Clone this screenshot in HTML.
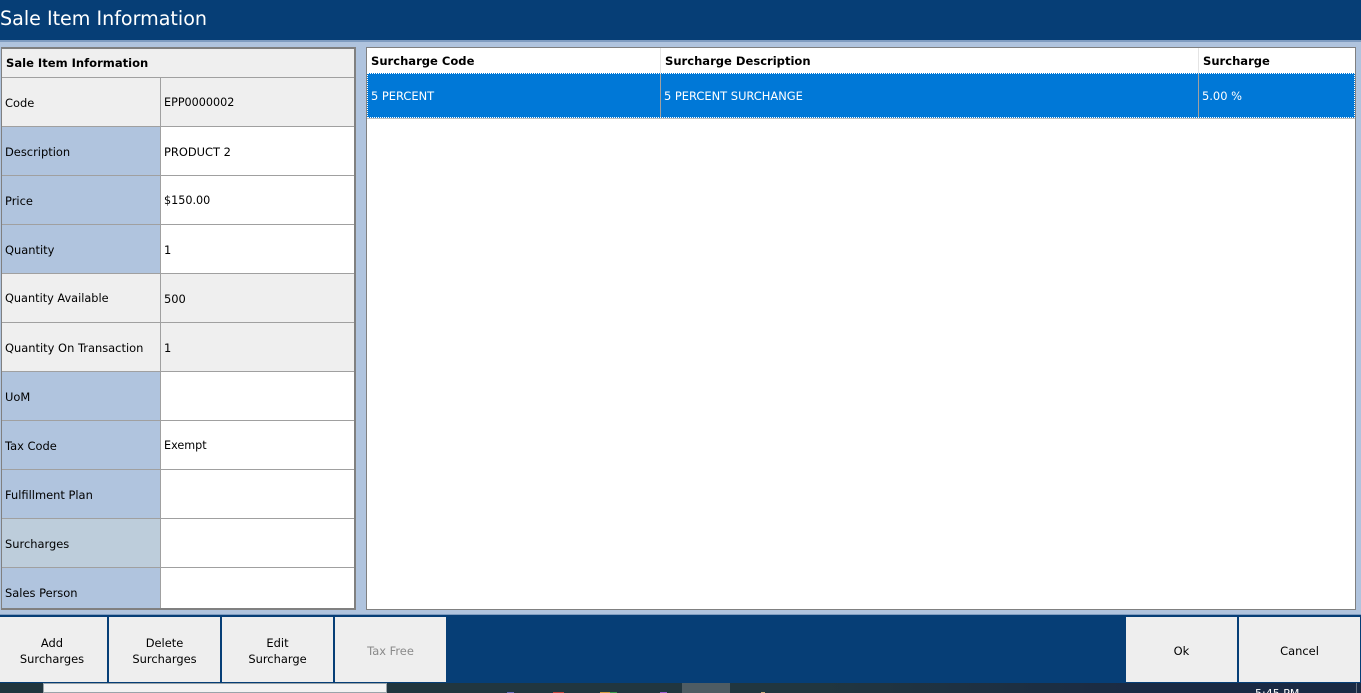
<!DOCTYPE html>
<html>
<head>
<meta charset="utf-8">
<style>
html,body{margin:0;padding:0;}
body{width:1361px;height:693px;overflow:hidden;position:relative;background:#b0c4de;font-family:"DejaVu Sans","Liberation Sans",sans-serif;font-size:11.45px;color:#000;}
div{position:absolute;box-sizing:border-box;}
.t{white-space:nowrap;line-height:14px;}
.b{font-weight:bold;font-size:11.55px;}
.w{color:#fff;}
.btn{background:#eeeeee;top:617px;height:65px;padding-top:2px;text-align:center;line-height:16px;display:flex;align-items:center;justify-content:center;}
</style>
</head>
<body>
<div style="left:0;top:0;width:1361px;height:40px;background:#063e76;"></div>
<div style="left:0;top:40px;width:1361px;height:2px;background:#7f9cc0;"></div>
<div class="t w" style="left:0;top:7px;font-size:19.1px;line-height:24px;">Sale Item Information</div>

<!-- Left panel -->
<div style="left:1px;top:47px;width:355px;height:563px;background:#fff;border:2px solid #808080;border-left-width:1px;"></div>
<div style="left:2px;top:49px;width:352px;height:28px;background:#efefef;"></div>
<div style="left:2px;top:78px;width:158px;height:48px;background:#efefef;"></div>
<div style="left:161px;top:78px;width:193px;height:48px;background:#efefef;"></div>
<div style="left:2px;top:127px;width:158px;height:146px;background:#b0c4de;"></div>
<div style="left:2px;top:274px;width:352px;height:97px;background:#efefef;"></div>
<div style="left:2px;top:372px;width:158px;height:146px;background:#b0c4de;"></div>
<div style="left:2px;top:519px;width:158px;height:48px;background:#bdcddb;"></div>
<div style="left:2px;top:568px;width:158px;height:40px;background:#b0c4de;"></div>
<div style="left:160px;top:78px;width:1px;height:530px;background:#a0a0a0;"></div>
<div style="left:2px;top:77px;width:352px;height:1px;background:#a0a0a0;"></div>
<div style="left:2px;top:126px;width:352px;height:1px;background:#a0a0a0;"></div>
<div style="left:2px;top:175px;width:352px;height:1px;background:#a0a0a0;"></div>
<div style="left:2px;top:224px;width:352px;height:1px;background:#a0a0a0;"></div>
<div style="left:2px;top:273px;width:352px;height:1px;background:#a0a0a0;"></div>
<div style="left:2px;top:322px;width:352px;height:1px;background:#a0a0a0;"></div>
<div style="left:2px;top:371px;width:352px;height:1px;background:#a0a0a0;"></div>
<div style="left:2px;top:420px;width:352px;height:1px;background:#a0a0a0;"></div>
<div style="left:2px;top:469px;width:352px;height:1px;background:#a0a0a0;"></div>
<div style="left:2px;top:518px;width:352px;height:1px;background:#a0a0a0;"></div>
<div style="left:2px;top:567px;width:352px;height:1px;background:#a0a0a0;"></div>

<div class="t b" style="left:6px;top:56px;">Sale Item Information</div>
<div class="t" style="left:5px;top:96px;">Code</div>
<div class="t" style="left:164px;top:96px;font-size:11.2px;">EPP0000002</div>
<div class="t" style="left:5px;top:145px;">Description</div>
<div class="t" style="left:164px;top:145px;">PRODUCT 2</div>
<div class="t" style="left:5px;top:194px;">Price</div>
<div class="t" style="left:164px;top:194px;font-size:11.2px;">$150.00</div>
<div class="t" style="left:5px;top:243px;">Quantity</div>
<div class="t" style="left:164px;top:243px;">1</div>
<div class="t" style="left:5px;top:292px;font-size:11.3px;">Quantity Available</div>
<div class="t" style="left:164px;top:292px;">500</div>
<div class="t" style="left:5px;top:341px;">Quantity On Transaction</div>
<div class="t" style="left:164px;top:341px;">1</div>
<div class="t" style="left:5px;top:390px;">UoM</div>
<div class="t" style="left:5px;top:439px;">Tax Code</div>
<div class="t" style="left:164px;top:439px;font-size:11.2px;">Exempt</div>
<div class="t" style="left:5px;top:488px;">Fulfillment Plan</div>
<div class="t" style="left:5px;top:537px;">Surcharges</div>
<div class="t" style="left:5px;top:586px;">Sales Person</div>

<!-- Right panel -->
<div style="left:366px;top:47px;width:990px;height:563px;background:#fff;border:1px solid #808080;"></div>
<div style="left:660px;top:48px;width:1px;height:25px;background:#e4e4e4;"></div>
<div style="left:1198px;top:48px;width:1px;height:25px;background:#e4e4e4;"></div>
<div class="t b" style="left:371px;top:54px;">Surcharge Code</div>
<div class="t b" style="left:665px;top:54px;">Surcharge Description</div>
<div class="t b" style="left:1203px;top:54px;">Surcharge</div>
<div style="left:367px;top:73px;width:988px;height:45px;background:#0078d7;border:1px dotted #fff;"></div>
<div style="left:660px;top:74px;width:1px;height:43px;background:#a0a0a0;"></div>
<div style="left:1198px;top:74px;width:1px;height:43px;background:#a0a0a0;"></div>
<div style="left:367px;top:118px;width:988px;height:1px;background:#c0c0c0;"></div>
<div class="t w" style="left:371px;top:89px;">5 PERCENT</div>
<div class="t w" style="left:664px;top:89px;">5 PERCENT SURCHANGE</div>
<div class="t w" style="left:1202px;top:89px;">5.00 %</div>

<!-- Bottom bar -->
<div style="left:0;top:614px;width:1361px;height:2px;background:#7f9cc0;"></div>
<div style="left:0;top:615px;width:1361px;height:68px;background:#063e76;"></div>
<div class="btn" style="left:0;width:107px;padding-right:3px;">Add<br>Surcharges</div>
<div class="btn" style="left:109px;width:111px;">Delete<br>Surcharges</div>
<div class="btn" style="left:222px;width:111px;">Edit<br>Surcharge</div>
<div class="btn" style="left:335px;width:111px;color:#8a8a8a;">Tax Free</div>
<div class="btn" style="left:1126px;width:111px;">Ok</div>
<div class="btn" style="left:1239px;width:121px;">Cancel</div>

<!-- Taskbar -->
<div style="left:0;top:683px;width:1361px;height:10px;overflow:hidden;background:linear-gradient(90deg,#21363f 0%,#21363f 60%,#1a2a44 85%,#1a2a44 100%);">
  <div style="left:43px;top:0;width:344px;height:10px;background:#f2f2f2;border:1px solid #9aa4aa;"></div>
  <div style="left:682px;top:0;width:48px;height:10px;background:#4e5c63;"></div>
  <div style="left:507px;top:9px;width:7px;height:1px;background:#6a6fc0;"></div>
  <div style="left:553px;top:9px;width:11px;height:1px;background:#c8433a;"></div>
  <div style="left:600px;top:9px;width:10px;height:1px;background:#d59a3a;"></div>
  <div style="left:610px;top:9px;width:7px;height:1px;background:#3a9a4a;"></div>
  <div style="left:660px;top:9px;width:7px;height:1px;background:#9a5ad0;"></div>
  <div style="left:761px;top:9px;width:4px;height:1px;background:#c8a878;"></div>
  <div class="t w" style="left:1255px;top:4px;font-size:11px;">5:45 PM</div>
  <div style="left:1356px;top:0;width:1px;height:10px;background:#6a7484;"></div>
</div>
</body>
</html>
